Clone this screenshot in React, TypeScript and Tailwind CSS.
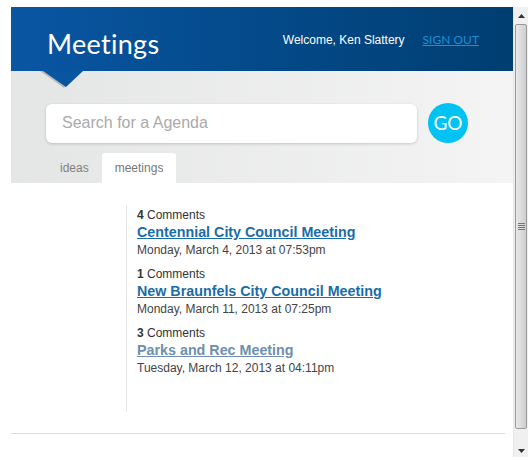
import React from "react";

interface Meeting {
  comments: number;
  title: string;
  date: string;
  visited?: boolean;
}

const meetings: Meeting[] = [
  { comments: 4, title: "Centennial City Council Meeting", date: "Monday, March 4, 2013 at 07:53pm" },
  { comments: 1, title: "New Braunfels City Council Meeting", date: "Monday, March 11, 2013 at 07:25pm" },
  { comments: 3, title: "Parks and Rec Meeting", date: "Tuesday, March 12, 2013 at 04:11pm", visited: true },
];

function Scrollbar() {
  return (
    <div className="w-[15px] h-[450px] bg-[#f0f0f0] flex flex-col border-l border-[#e6e6e6]">
      <div className="h-[17px] flex items-center justify-center">
        <svg width="7" height="4" viewBox="0 0 7 4">
          <polygon points="3.5,0 7,4 0,4" fill="#333" />
        </svg>
      </div>
      <div className="h-[405px] mx-[1px] rounded-[2px] border border-[#9a9a9a] bg-gradient-to-r from-[#e8e8e8] to-[#cfcfcf] flex items-center justify-center">
        <div className="flex flex-col gap-[1px]">
          <div className="w-[7px] h-[1px] bg-[#777]" />
          <div className="w-[7px] h-[1px] bg-[#777]" />
          <div className="w-[7px] h-[1px] bg-[#777]" />
          <div className="w-[7px] h-[1px] bg-[#777]" />
        </div>
      </div>
      <div className="flex-1 flex items-end justify-center pb-[4px]">
        <svg width="7" height="4" viewBox="0 0 7 4">
          <polygon points="0,0 7,0 3.5,4" fill="#333" />
        </svg>
      </div>
    </div>
  );
}

export default function App() {
  return (
    <div className="w-[531px] h-[464px] bg-white flex pl-[11px] pt-[7px] overflow-hidden" style={{ fontFamily: "'Liberation Sans', Arial, sans-serif" }}>
      <div className="w-[502px] flex flex-col">
        <header className="relative h-[64px] bg-gradient-to-r from-[#0a56a3] to-[#003e71] flex items-center pl-[36px] pr-[34px]">
          <h1 className="text-white text-[27px] leading-none tracking-[0.3px] pt-[8px]" style={{ fontFamily: "Lato, 'Open Sans', sans-serif" }}>
            Meetings
          </h1>
          <div className="ml-auto flex items-center gap-[18px] pt-[2px]">
            <span className="text-white text-[12px]">Welcome, Ken Slattery</span>
            <a href="#" className="text-[#1d8fd6] text-[12px] underline" style={{ fontFamily: "Lato, sans-serif" }}>
              SIGN OUT
            </a>
          </div>
          <svg className="absolute left-[28px] top-[64px]" width="48" height="18" viewBox="0 0 48 18">
            <polygon points="1,0 41,0 25,17" fill="#b9b9b9" />
            <polygon points="4,0 44,0 27,16" fill="#0a55a0" />
          </svg>
        </header>

        <section className="h-[112px] bg-gradient-to-r from-[#e4e5e5] to-[#f4f4f4] flex flex-col">
          <div className="flex items-center pt-[32px] pl-[35px] gap-[11px]">
            <div className="w-[371px] h-[39px] bg-white rounded-[6px] shadow-[0_1px_3px_rgba(0,0,0,0.18)] flex items-center pl-[16px]">
              <span className="text-[#aaaaaa] text-[16px]">Search for a Agenda</span>
            </div>
            <button className="w-[40px] h-[40px] rounded-full bg-[#00c3f3] text-white text-[19px] flex items-center justify-center" style={{ fontFamily: "Lato, sans-serif" }}>
              GO
            </button>
          </div>
          <nav className="mt-auto flex items-end pl-[36px] text-[12px] text-[#808080]">
            <span className="px-[13px] h-[30px] flex items-center">ideas</span>
            <span className="px-[13px] h-[30px] bg-white rounded-t-[3px] flex items-center text-[#777]">meetings</span>
          </nav>
        </section>

        <main className="pt-[22px] pl-[115px]">
          <ul className="border-l border-[#e4e4e4] pl-[10px] pt-[2px] pb-[34px] flex flex-col gap-[6px]">
            {meetings.map((m) => (
              <li key={m.title} className="flex flex-col">
                <span className="text-[12px] leading-[16px] text-[#333]">
                  <b>{m.comments}</b> Comments
                </span>
                <a
                  href="#"
                  className={`text-[14.3px] leading-[18px] font-bold underline ${m.visited ? "text-[#6e8fad]" : "text-[#1a6ca8]"}`}
                >
                  {m.title}
                </a>
                <span className="text-[12px] leading-[19px] text-[#444]">{m.date}</span>
              </li>
            ))}
          </ul>
        </main>

        <div className="mt-[21px] h-px w-[494px] bg-[#dedede]" />
      </div>
      <Scrollbar />
    </div>
  );
}
